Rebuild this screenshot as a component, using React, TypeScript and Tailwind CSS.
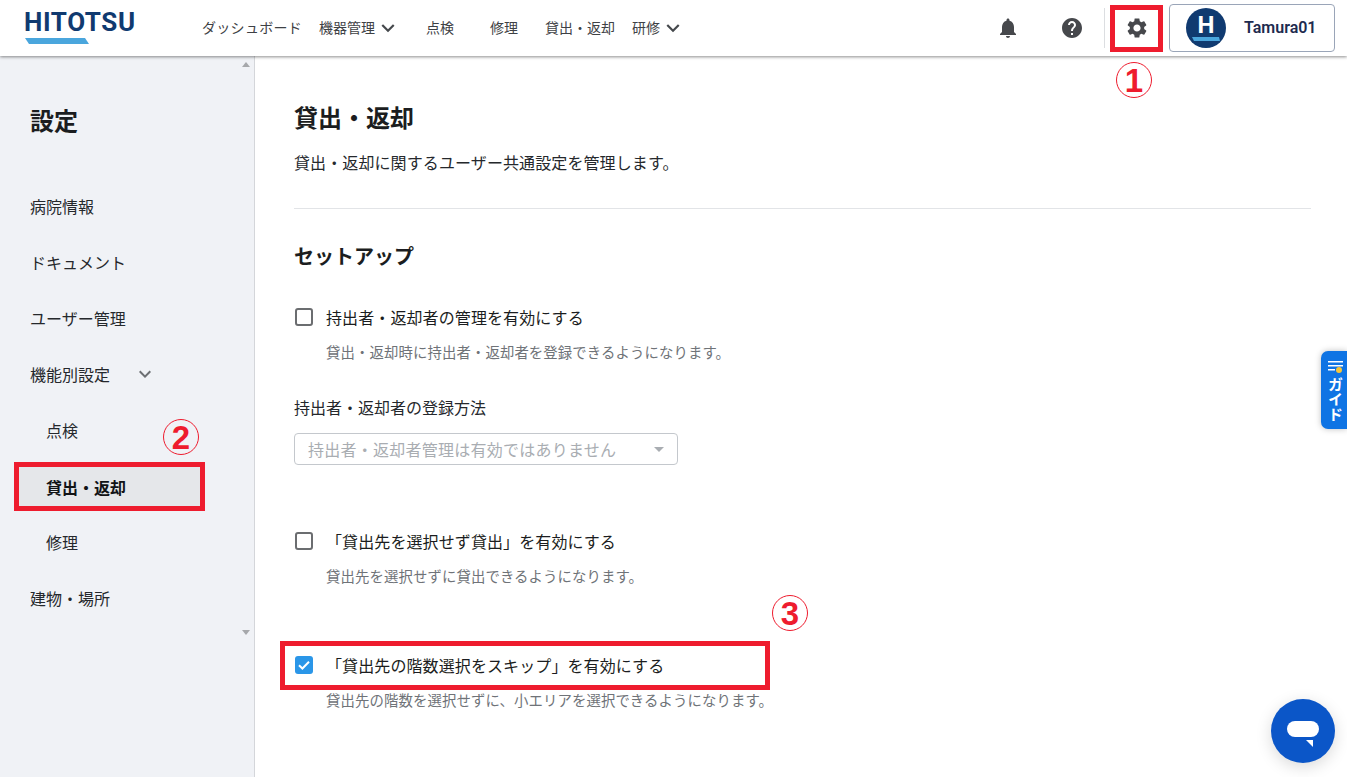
import React from 'react';

const FONT = "font-['Noto_Sans_CJK_JP','Liberation_Sans',sans-serif]";

const BELL = 'M12 22c1.1 0 2-.9 2-2h-4c0 1.1.89 2 2 2zm6-6v-5c0-3.07-1.64-5.64-4.5-6.32V4c0-.83-.67-1.5-1.5-1.5s-1.5.67-1.5 1.5v.68C7.63 5.36 6 7.92 6 11v5l-2 2v1h16v-1l-2-2z';
const HELP = 'M12 2C6.48 2 2 6.48 2 12s4.48 10 10 10 10-4.48 10-10S17.52 2 12 2zm1 17h-2v-2h2v2zm2.07-7.75l-.9.92C13.45 12.9 13 13.5 13 15h-2v-.5c0-1.1.45-2.1 1.17-2.83l1.24-1.26c.37-.36.59-.86.59-1.41 0-1.1-.9-2-2-2s-2 .9-2 2H8c0-2.21 1.79-4 4-4s4 1.79 4 4c0 .88-.36 1.68-.93 2.25z';
const GEAR = 'M19.14 12.94c.04-.3.06-.61.06-.94 0-.32-.02-.64-.07-.94l2.03-1.58c.18-.14.23-.41.12-.61l-1.92-3.32c-.12-.22-.37-.29-.59-.22l-2.39.96c-.5-.38-1.03-.7-1.62-.94l-.36-2.54c-.04-.24-.24-.41-.48-.41h-3.84c-.24 0-.43.17-.47.41l-.36 2.54c-.59.24-1.13.57-1.62.94l-2.39-.96c-.22-.08-.47 0-.59.22L2.74 8.87c-.12.21-.08.47.12.61l2.03 1.58c-.05.3-.09.63-.09.94s.02.64.07.94l-2.03 1.58c-.18.14-.23.41-.12.61l1.92 3.32c.12.22.37.29.59.22l2.39-.96c.5.38 1.03.7 1.62.94l.36 2.54c.05.24.24.41.48.41h3.84c.24 0 .44-.17.47-.41l.36-2.54c.59-.24 1.13-.56 1.62-.94l2.39.96c.22.08.47 0 .59-.22l1.92-3.32c.12-.22.07-.47-.12-.61l-2.01-1.58zM12 15.6c-1.98 0-3.6-1.62-3.6-3.6s1.62-3.6 3.6-3.6 3.6 1.62 3.6 3.6-1.62 3.6-3.6 3.6z';
const CHEVRON = 'M16.59 8.59L12 13.17 7.41 8.59 6 10l6 6 6-6z';

const Icon = ({ d, className }: { d: string; className: string }) => (
    <svg viewBox="0 0 24 24" className={className} fill="currentColor">
        <path d={d} />
    </svg>
);

const Check = ({ checked }: { checked?: boolean }) =>
    checked ? (
        <span className="w-[18px] h-[18px] ml-[1px] rounded-[3px] bg-[#2a96e8] flex items-center justify-center shrink-0">
            <svg viewBox="0 0 18 18" className="w-[18px] h-[18px]" fill="none" stroke="#fff" strokeWidth="2">
                <path d="M4 9.2l3.4 3.3L14 5.8" />
            </svg>
        </span>
    ) : (
        <span className="w-[18px] h-[18px] ml-[1px] rounded-[3px] border-2 border-[#6b6d70] shrink-0" />
    );

const Option = ({ label, help, checked, className }: { label: string; help: string; checked?: boolean; className?: string }) => (
    <div className={className}>
        <div className="flex items-center h-6 text-[16px] tracking-[0.1px] text-[#1b1d20]">
            <Check checked={checked} />
            <span className="ml-[13px]">{label}</span>
        </div>
        <p className="ml-[32px] mt-[13px] h-5 leading-5 text-[14.4px] tracking-[0.1px] text-[#6f7378]">{help}</p>
    </div>
);

const NavItem = ({ label, chevron, className }: { label: string; chevron?: boolean; className: string }) => (
    <div className={`flex items-center whitespace-nowrap ${className}`}>
        <span className="mb-[2px]">{label}</span>
        {chevron && <Icon d={CHEVRON} className="w-[26px] h-[26px] text-[#45484c]" />}
    </div>
);

const SideItem = ({ label, sub }: { label: string; sub?: boolean }) => (
    <div className={`h-14 flex items-center text-[16px] text-[#25282c] ${sub ? 'pl-[46px]' : 'pl-[30px]'}`}>{label}</div>
);

const Circled = ({ n, className }: { n: string; className: string }) => (
    <div className={`absolute z-20 w-[36px] h-[36px] rounded-full border border-[#ee1c2e] flex items-center justify-center text-[33px] leading-none font-bold text-[#ee1c2e] font-['Liberation_Sans',sans-serif] ${className}`}>
        {n}
    </div>
);

const RedBox = ({ className }: { className: string }) => (
    <div className={`absolute z-20 border-[5px] border-[#ee1c2e] ${className}`} />
);

export default function App() {
    return (
        <div className={`relative w-[1347px] h-[777px] overflow-hidden bg-white flex flex-col ${FONT}`}>
            {/* Header */}
            <header className="relative z-10 h-14 shrink-0 bg-white flex items-center shadow-[0_1px_3px_rgba(0,0,0,0.45)]">
                <div className="ml-[24px] w-[111px] h-[44px] shrink-0 flex flex-col">
                    <span className="block h-[29px] pt-[2px] leading-[29px] text-[26px] font-bold tracking-[0.6px] text-[#103a70] font-['Roboto',sans-serif]">HITOTSU</span>
                    <svg viewBox="0 0 64 6" className="w-[64px] h-[6px] mt-[3px] ml-[1px]">
                        <polygon points="0,0 60,0 64,6 4,6" fill="#4aa6dd" />
                    </svg>
                </div>
                <nav className="ml-[66px] flex items-center text-[14px] text-[#3e4145]">
                    <NavItem label="ダッシュボード" className="w-[101px] pl-[1px] tracking-[0.3px]" />
                    <NavItem label="機器管理" chevron className="ml-[17px]" />
                    <NavItem label="点検" className="ml-[25px]" />
                    <NavItem label="修理" className="ml-[36px]" />
                    <NavItem label="貸出・返却" className="ml-[27px]" />
                    <NavItem label="研修" chevron className="ml-[17px]" />
                </nav>
                <div className="ml-auto flex items-center text-[#46484c]">
                    <Icon d={BELL} className="w-6 h-6" />
                    <Icon d={HELP} className="w-6 h-6 ml-[40px]" />
                    <div className="w-px h-10 bg-[#dcdee1] ml-[20px]" />
                    <Icon d={GEAR} className="w-6 h-6 ml-[20px]" />
                    <div className="ml-[20px] mr-[12px] w-[166px] h-[48px] border border-[#9aa5b8] rounded-[4px] flex items-center pl-[16px]">
                        <svg viewBox="0 0 40 40" className="w-10 h-10 shrink-0">
                            <circle cx="20" cy="20" r="20" fill="#103a70" />
                            <text x="20" y="25" textAnchor="middle" fontSize="24" fontWeight="700" fill="#fff" fontFamily="Roboto, sans-serif">H</text>
                            <polygon points="6,29 33,29 34,33 8,33" fill="#4aa6dd" />
                        </svg>
                        <span className="ml-[18px] text-[16px] font-semibold text-[#1d2b4f] font-['Roboto',sans-serif]">Tamura01</span>
                    </div>
                </div>
            </header>

            <div className="flex-1 flex min-h-0">
                {/* Sidebar */}
                <aside className="relative w-[255px] shrink-0 bg-[#f0f2f6] border-r border-[#d4d6da]">
                    <h2 className="ml-[30px] mt-[46px] h-9 leading-9 text-[24px] font-bold text-[#1b1d20]">設定</h2>
                    <div className="mt-[40px]">
                        <SideItem label="病院情報" />
                        <SideItem label="ドキュメント" />
                        <SideItem label="ユーザー管理" />
                        <div className="h-14 flex items-center pl-[30px] text-[16px] text-[#25282c]">
                            機能別設定
                            <Icon d={CHEVRON} className="w-6 h-6 ml-[23px] text-[#6c6f73]" />
                        </div>
                        <SideItem label="点検" sub />
                        <div className="h-14 pt-[4px]">
                            <div className="ml-[14px] w-[191px] h-[49px] bg-[#e5e7ea] flex items-center pl-[32px] text-[16px] font-bold text-[#111316]">
                                貸出・返却
                            </div>
                        </div>
                        <SideItem label="修理" sub />
                        <SideItem label="建物・場所" />
                    </div>
                    <div className="absolute right-[4px] top-[6px] border-x-[4px] border-x-transparent border-b-[5px] border-b-[#a6a8ab]" />
                    <div className="absolute right-[4px] top-[574px] border-x-[4px] border-x-transparent border-t-[5px] border-t-[#a6a8ab]" />
                </aside>

                {/* Main */}
                <main className="flex-1 min-w-0 pl-[39px] pr-[36px]">
                    <h1 className="mt-[43px] h-9 leading-9 text-[24px] font-bold text-[#1b1d20]">貸出・返却</h1>
                    <p className="mt-[15px] h-6 leading-6 text-[16px] tracking-[0.1px] text-[#25282c]">貸出・返却に関するユーザー共通設定を管理します。</p>
                    <div className="mt-[34px] h-px bg-[#e2e4e7]" />
                    <h2 className="mt-[31px] h-8 leading-8 text-[20px] font-bold text-[#1b1d20]">セットアップ</h2>
                    <Option
                        className="mt-[33px]"
                        label="持出者・返却者の管理を有効にする"
                        help="貸出・返却時に持出者・返却者を登録できるようになります。"
                    />
                    <div className="mt-[33px] h-6 leading-6 text-[16px] text-[#25282c]">持出者・返却者の登録方法</div>
                    <div className="mt-[14px] w-[384px] h-[32px] border border-[#c4c8cd] rounded-[4px] flex items-center pl-[13px] pr-[13px] text-[16px] tracking-[0.25px] text-[#a9adb2]">
                        <span>持出者・返却者管理は有効ではありません</span>
                        <div className="ml-auto border-x-[5px] border-x-transparent border-t-[5px] border-t-[#a9adb2]" />
                    </div>
                    <Option
                        className="mt-[64px]"
                        label="「貸出先を選択せず貸出」を有効にする"
                        help="貸出先を選択せずに貸出できるようになります。"
                    />
                    <Option
                        checked
                        className="mt-[67px]"
                        label="「貸出先の階数選択をスキップ」を有効にする"
                        help="貸出先の階数を選択せずに、小エリアを選択できるようになります。"
                    />
                </main>
            </div>

            {/* Guide tab */}
            <div className="absolute right-0 top-[351px] w-[26px] h-[78px] bg-[#0f74e4] rounded-l-[7px] shadow-[0_0_6px_rgba(0,0,0,0.25)] flex flex-col items-center pt-[10px] pl-[3px]">
                <svg viewBox="0 0 15 12" className="w-[15px] h-[12px] shrink-0">
                    <rect x="0" y="0" width="15" height="1.5" fill="#fff" />
                    <rect x="0" y="4" width="15" height="1.5" fill="#fff" />
                    <rect x="0" y="8" width="7" height="1.5" fill="#fff" />
                    <circle cx="11" cy="9" r="3" fill="#f8c537" />
                </svg>
                <span className="mt-[4px] text-[15px] leading-[15px] font-bold text-white [writing-mode:vertical-rl]">ガイド</span>
            </div>

            {/* Chat button */}
            <div className="absolute left-[1271px] top-[699px] w-16 h-16 rounded-full bg-[#0b56c8] shadow-[0_4px_16px_rgba(0,0,0,0.15)] flex items-center justify-center">
                <svg viewBox="0 0 64 64" className="w-16 h-16">
                    <rect x="16" y="22" width="32" height="16" rx="8" fill="#fff" />
                    <polygon points="35,41 42,41 42,48" fill="#fff" />
                </svg>
            </div>

            {/* Annotations */}
            <RedBox className="left-[1110px] top-[5px] w-[53px] h-[47px]" />
            <RedBox className="left-[14px] top-[462px] w-[191px] h-[49px]" />
            <RedBox className="left-[280px] top-[641px] w-[490px] h-[49px]" />
            <Circled n="1" className="left-[1116px] top-[62px]" />
            <Circled n="2" className="left-[163px] top-[419px]" />
            <Circled n="3" className="left-[772px] top-[595px]" />
        </div>
    );
}
